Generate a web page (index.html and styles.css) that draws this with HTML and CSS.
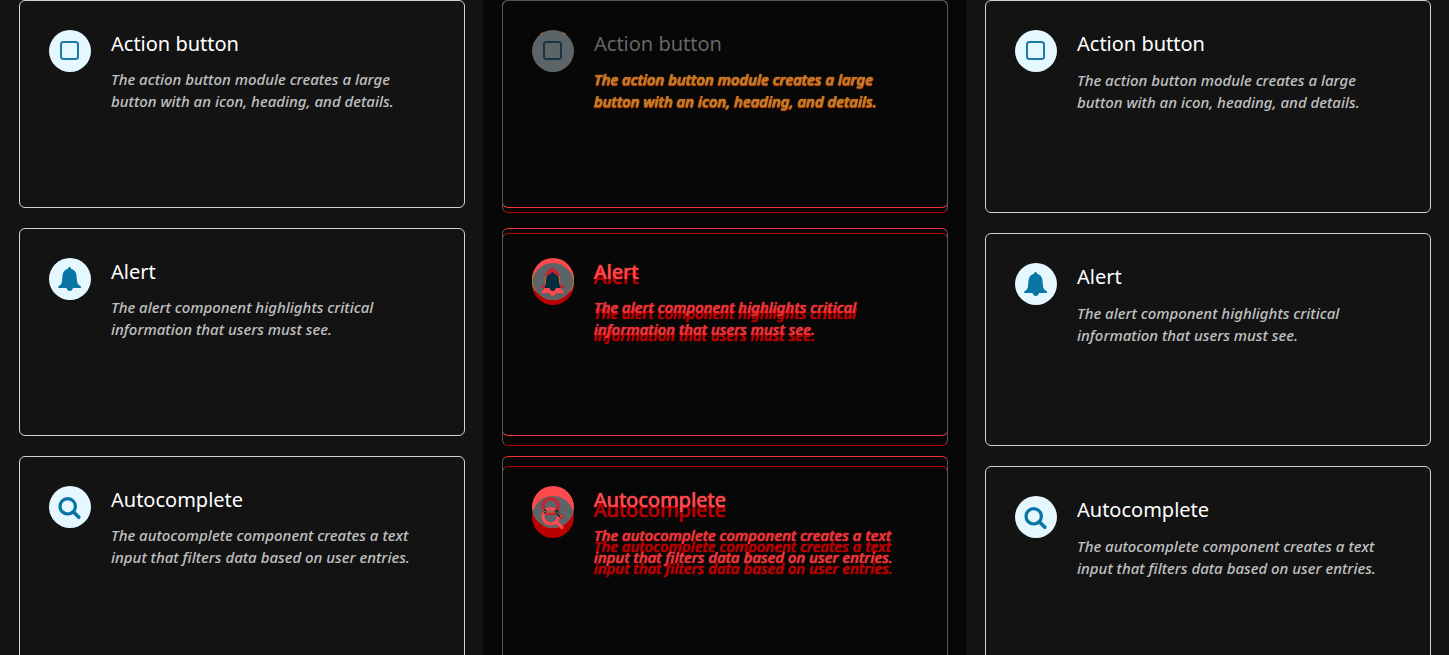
FILE: index.html
```html
<!DOCTYPE html>
<html lang="en">
<head>
<meta charset="utf-8">
<title>Component list comparison</title>
<link rel="stylesheet" href="styles.css">
</head>
<body>
<svg class="defs" width="0" height="0" aria-hidden="true">
  <defs>
    <path id="bell" d="M20.500 9C21.500 9 22 9.700 22 10.800C25.500 11.700 27.300 14.200 27.500 18L28 23C28.200 25.500 29.500 27 31.500 28C32.500 28.500 32.300 30 31.300 30H24C23.500 32 22.400 33 20.800 33C19.200 33 18 32 17.500 30H10C9 30 8.800 28.500 9.800 28C11.800 27 12.800 25.500 13 23L13.500 18C13.800 14.200 15.500 11.700 19 10.800C19 9.700 19.500 9 20.500 9Z"/>
    <g id="search" fill="none" stroke-linecap="round"><circle cx="18.700" cy="20.300" r="7.700" stroke-width="3.200"/><path d="M24.500 26L29.800 31.300" stroke-width="3.600"/></g>
    <clipPath id="disc-five"><circle cx="21" cy="26" r="21"/></clipPath>
    <clipPath id="disc-ten"><circle cx="21" cy="31" r="21"/></clipPath>
    <clipPath id="bell-shape"><use href="#bell"/></clipPath>
    <mask id="search-shape" maskUnits="userSpaceOnUse" x="0" y="0" width="42" height="42"><use href="#search" stroke="#fff"/></mask>
  </defs>
</svg>
<main class="compare">
  <section class="panel" aria-label="Before">
    <div class="list">
      <article class="card">
        <svg class="icon" viewBox="0 0 42 42" aria-hidden="true"><circle class="disc" cx="21" cy="21" r="21"/><rect class="square" x="12" y="12" width="17" height="17" rx="2.500"/></svg>
        <div class="copy"><h2>Action button</h2><p>The action button module creates a large button with an icon, heading, and details.</p></div>
      </article>
      <article class="card">
        <svg class="icon" viewBox="0 0 42 42" aria-hidden="true"><circle class="disc" cx="21" cy="21" r="21"/><use class="solid" href="#bell"/></svg>
        <div class="copy"><h2>Alert</h2><p>The alert component highlights critical information that users must see.</p></div>
      </article>
      <article class="card">
        <svg class="icon" viewBox="0 0 42 42" aria-hidden="true"><circle class="disc" cx="21" cy="21" r="21"/><use class="line" href="#search"/></svg>
        <div class="copy"><h2>Autocomplete</h2><p>The autocomplete component creates a text input that filters data based on user entries.</p></div>
      </article>
    </div>
  </section>

  <section class="panel diff" aria-label="Difference">
    <div class="list tall removed" aria-hidden="true">
      <article class="card same-top">
        <div class="icon"></div>
        <div class="copy"><h2>Action button</h2><p>The action button module creates a large button with an icon, heading, and details.</p></div>
      </article>
      <article class="card">
        <div class="icon"></div>
        <div class="copy"><h2>Alert</h2><p>The alert component highlights critical information that users must see.</p></div>
      </article>
      <article class="card">
        <div class="icon"></div>
        <div class="copy"><h2>Autocomplete</h2><p>The autocomplete component creates a text input that filters data based on user entries.</p></div>
      </article>
    </div>
    <div class="list added">
      <article class="card same-top">
        <svg class="icon" viewBox="0 0 42 42" aria-hidden="true"><circle class="dim" cx="21" cy="21" r="21"/><rect class="square dark-line" x="12" y="12" width="17" height="17" rx="2.500"/><path d="M8 4.500L11 2.500M31 2.500L34 4.500" stroke="#c47a28"/></svg>
        <div class="copy"><h2>Action button</h2><p>The action button module creates a large button with an icon, heading, and details.</p></div>
      </article>
      <article class="card">
        <svg class="icon" viewBox="0 0 42 42" aria-hidden="true">
          <circle class="old" cx="21" cy="26" r="21"/>
          <circle class="new" cx="21" cy="21" r="21"/>
          <g clip-path="url(#disc-five)">
            <circle class="dim" cx="21" cy="21" r="21"/>
            <use class="trace" href="#bell"/>
            <use class="new" href="#bell" y="5"/>
            <g clip-path="url(#bell-shape)"><use class="shared" href="#bell" y="5"/></g>
          </g>
          <path d="M2 14Q0 18 .5 25Q1 29 3 33M40 14Q42 18 41.500 25Q41 29 39 33M14 18L13 27M27 18L28 27" stroke="#b9752c" fill="none"/>
        </svg>
        <div class="copy"><h2>Alert</h2><p>The alert component highlights critical information that users must see.</p></div>
      </article>
      <article class="card">
        <svg class="icon" viewBox="0 0 42 42" aria-hidden="true">
          <circle class="old" cx="21" cy="31" r="21"/>
          <circle class="new" cx="21" cy="21" r="21"/>
          <g clip-path="url(#disc-ten)"><circle class="dim" cx="21" cy="21" r="21"/><use class="new-line" href="#search" y="10"/></g>
          <use class="trace-line" href="#search"/>
          <g mask="url(#search-shape)"><use class="shared-line" href="#search" y="10"/></g>
          <path d="M10 24L14 26H24M25 26L30 31" stroke="#c07b30" fill="none"/>
        </svg>
        <div class="copy"><h2>Autocomplete</h2><p>The autocomplete component creates a text input that filters data based on user entries.</p></div>
      </article>
    </div>
  </section>

  <section class="panel" aria-label="After">
    <div class="list tall">
      <article class="card">
        <svg class="icon" viewBox="0 0 42 42" aria-hidden="true"><circle class="disc" cx="21" cy="21" r="21"/><rect class="square" x="12" y="12" width="17" height="17" rx="2.500"/></svg>
        <div class="copy"><h2>Action button</h2><p>The action button module creates a large button with an icon, heading, and details.</p></div>
      </article>
      <article class="card">
        <svg class="icon" viewBox="0 0 42 42" aria-hidden="true"><circle class="disc" cx="21" cy="21" r="21"/><use class="solid" href="#bell"/></svg>
        <div class="copy"><h2>Alert</h2><p>The alert component highlights critical information that users must see.</p></div>
      </article>
      <article class="card">
        <svg class="icon" viewBox="0 0 42 42" aria-hidden="true"><circle class="disc" cx="21" cy="21" r="21"/><use class="line" href="#search"/></svg>
        <div class="copy"><h2>Autocomplete</h2><p>The autocomplete component creates a text input that filters data based on user entries.</p></div>
      </article>
    </div>
  </section>
</main>
</body>
</html>
```
FILE: styles.css
```css
* { box-sizing: border-box; }
body {
  margin: 0;
  height: 100vh;
  overflow: hidden;
  background: #131313;
  color: #fff;
  font-family: "Noto Sans", sans-serif;
}
.defs { display: block; }
.compare { display: grid; grid-template-columns: repeat(3, 1fr); }
.panel { display: grid; align-items: start; }
.list {
  grid-area: 1 / 1;
  display: grid;
  gap: 20px;
  padding: 0 18px 20px 19px;
}
.card {
  display: flex;
  align-items: flex-start;
  gap: 20px;
  min-height: 208px;
  padding: 29px;
  border: 1px solid #d0d0d0;
  border-radius: 6px;
}
.tall .card { min-height: 213px; }
.icon { flex: none; width: 42px; height: 42px; overflow: visible; }
.copy { flex: 1; max-width: 308px; }
h2 { margin: 0 0 10px; font-size: 20px; line-height: 28px; font-weight: 400; }
p {
  margin: 0;
  font-size: 15px;
  font-weight: 500;
  line-height: 22px;
  font-style: italic;
  color: #c0c0c0;
}
.tall h2 { margin-bottom: 11px; }

.disc { fill: #e6f8ff; }
.solid { fill: #0875a5; }
.line { stroke: #0875a5; }
.square { fill: none; stroke: #1b7aa8; stroke-width: 2; }

.diff { background: #070707; }
.diff .card { border-color: #b80000 #555; }
.diff h2, .diff p { color: #b80000; text-shadow: 0 0 1px currentColor, 0 0 1px currentColor; }
.added .card { border-color: #f03338 #555; }
.added h2 { color: #ff464a; }
.added p { color: #e93438; }
.diff .same-top { border-top-color: #555; }
.diff .same-top h2 { color: #666; text-shadow: none; }
.removed .same-top h2 { visibility: hidden; }
.removed .same-top p { color: #b03a08; }
.added .same-top p { color: #c47a28; }
.dim { fill: #5c6467; }
.dark-line { stroke: #153444; }
.old { fill: #b80000; }
.new { fill: #ff4a4d; }
.trace { fill: #c42331; }
.shared { fill: #032e42; }
.new-line { stroke: #ff4a4d; }
.trace-line { stroke: #c42331; }
.shared-line { stroke: #032e42; }
```
